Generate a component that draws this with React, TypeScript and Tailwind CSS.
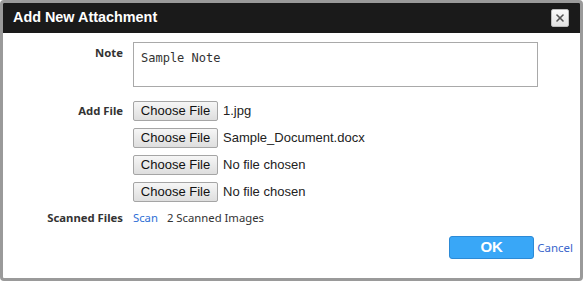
import { X } from "lucide-react";

const files = ["1.jpg", "Sample_Document.docx", "No file chosen", "No file chosen"];

const label = "w-[120px] shrink-0 text-right font-['Noto_Sans',sans-serif] text-[11.3px] font-bold text-[#333]";

export default function App() {
  return (
    <div className="h-[281px] w-[585px] bg-white">
      <div className="flex h-[281px] w-[583px] flex-col overflow-hidden rounded-[4px] border-[3px] border-[#9a9a9a] bg-white">
        {/* title bar */}
        <div className="flex h-[30px] shrink-0 items-center justify-between bg-[#1a1a1a] pl-[10px] pr-[11px]">
          <span className="font-['Liberation_Sans',sans-serif] text-[14.4px] font-bold text-white">
            Add New Attachment
          </span>
          <button className="flex h-[18px] w-[18px] items-center justify-center rounded-[2px] border border-[#bbb] bg-gradient-to-b from-[#fafafa] to-[#e2e2e2]">
            <X className="h-[12px] w-[12px] text-[#555]" strokeWidth={3.2} />
          </button>
        </div>

        <div className="flex flex-1 flex-col pt-[9px]">
          {/* note */}
          <div className="flex items-start">
            <div className={`${label} pt-[3px]`}>Note</div>
            <div className="ml-[10px] h-[45px] w-[405px] border border-[#a9a9a9] px-[7px] pt-[6px] font-['DejaVu_Sans_Mono',monospace] text-[12px] text-[#333]">
              Sample Note
            </div>
          </div>

          {/* files */}
          <div className="mt-[14px] flex items-start">
            <div className={`${label} pt-[2px]`}>Add File</div>
            <div className="ml-[10px] flex flex-col gap-[7px]">
              {files.map((f, i) => (
                <div key={i} className="flex items-center gap-[5px] font-['Liberation_Sans',sans-serif] text-[13px] leading-[20px] text-[#222]">
                  <span className="flex h-[20px] w-[85px] items-center justify-center rounded-[2px] border border-[#a5a5a5] bg-gradient-to-b from-[#f6f6f6] to-[#dedede] text-[#111]">
                    Choose File
                  </span>
                  <span>{f}</span>
                </div>
              ))}
            </div>
          </div>

          {/* scanned */}
          <div className="mt-[8px] flex items-center">
            <div className={label}>Scanned Files</div>
            <div className="ml-[10px] flex gap-[9px] font-['Noto_Sans',sans-serif] text-[11.3px]">
              <span className="text-[#2f6fd6]">Scan</span>
              <span className="text-[#333]">2 Scanned Images</span>
            </div>
          </div>

          {/* actions */}
          <div className="mt-[9px] flex items-center justify-end pr-[7px]">
            <button className="flex h-[23px] w-[85px] items-center justify-center rounded-[3px] border border-[#2c8ad6] bg-[#39a7f7] font-['Liberation_Sans',sans-serif] text-[15px] font-bold text-white">
              OK
            </button>
            <span className="ml-[3px] font-['Noto_Sans',sans-serif] text-[11.5px] text-[#3a66cc]">Cancel</span>
          </div>
        </div>
      </div>
    </div>
  );
}
